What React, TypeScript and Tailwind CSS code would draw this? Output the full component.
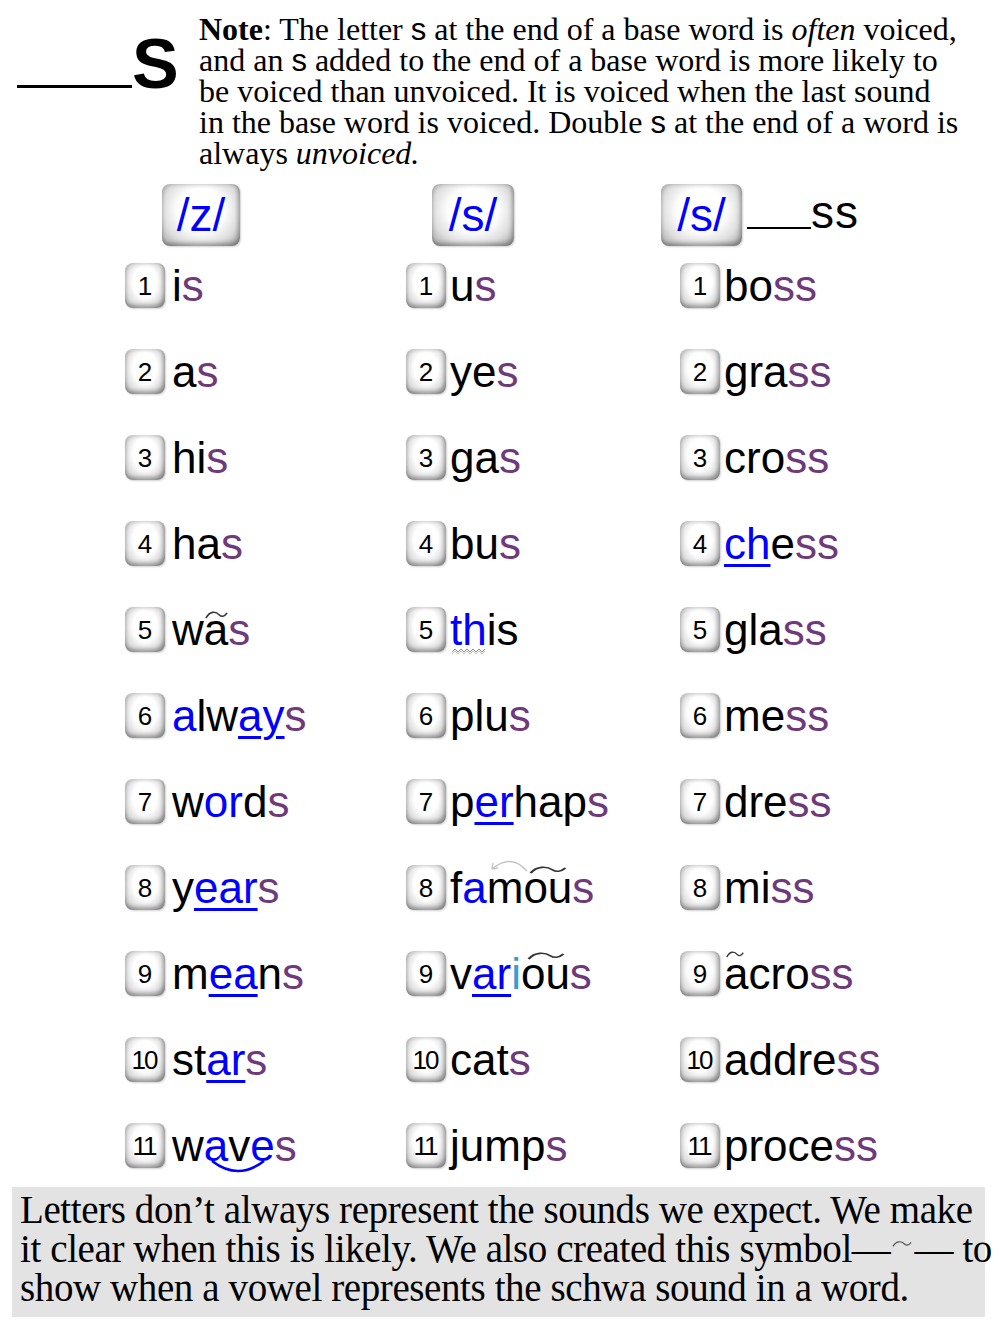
import React from "react";

type Color = "k" | "b" | "p" | "t";

interface Seg {
  t: string;
  c?: Color;
  u?: boolean;
  mark?: React.ReactNode;
}

const COLORS: Record<Color, string> = {
  k: "text-black",
  b: "text-[#0000ff]",
  p: "text-[#6f3a7a]",
  t: "text-[#3a9ccf]",
};

// small schwa symbol that sits above a vowel
const Schwa = ({ className }: { className: string }) => (
  <svg className={className} viewBox="0 0 24 8" preserveAspectRatio="none" fill="none">
    <path d="M1 7 C5 0 11 0 15 4 C17 6 20 6 23 2" stroke="#333" strokeWidth="1.6" />
  </svg>
);

const schwaA = <Schwa className="absolute left-[1px] top-[6px] w-[23px] h-[8px]" />;
const schwaOu = <Schwa className="absolute left-[6px] top-[3px] w-[38px] h-[8px]" />;
const schwaAcross = <Schwa className="absolute left-[2px] top-[2px] w-[18px] h-[7px]" />;

const famousArrow = (
  <svg className="absolute left-[25px] top-[-6px] w-[42px] h-[16px]" viewBox="0 0 42 16" fill="none">
    <path d="M40 14 Q24 -4 5 12" stroke="#c4c4c4" strokeWidth="1.5" />
    <path d="M5 12 L6 6 M5 12 L11 11" stroke="#c4c4c4" strokeWidth="1.5" />
  </svg>
);

const wavesArc = (
  <svg className="absolute left-[6px] top-[38px] w-[56px] h-[14px]" viewBox="0 0 56 14" fill="none">
    <path d="M2 2 Q28 22 54 2" stroke="#0000ff" strokeWidth="2.5" />
  </svg>
);

const zigzag = (
  <svg className="absolute left-[2px] top-[43px] w-[34px] h-[6px]" viewBox="0 0 34 6" fill="none">
    <path d="M0 4 L3 1 L6 4 L9 1 L12 4 L15 1 L18 4 L21 1 L24 4 L27 1 L30 4 L33 1" stroke="#8a8a8a" strokeWidth="1" />
    <path d="M0 6 L3 3 L6 6 L9 3 L12 6 L15 3 L18 6 L21 3 L24 6 L27 3 L30 6 L33 3" stroke="#b0b0b0" strokeWidth="0.8" />
  </svg>
);

const col1: Seg[][] = [
  [{ t: "i" }, { t: "s", c: "p" }],
  [{ t: "a" }, { t: "s", c: "p" }],
  [{ t: "hi" }, { t: "s", c: "p" }],
  [{ t: "ha" }, { t: "s", c: "p" }],
  [{ t: "w" }, { t: "a", mark: schwaA }, { t: "s", c: "p" }],
  [{ t: "a", c: "b" }, { t: "lw" }, { t: "ay", c: "b", u: true }, { t: "s", c: "p" }],
  [{ t: "w" }, { t: "or", c: "b" }, { t: "d" }, { t: "s", c: "p" }],
  [{ t: "y" }, { t: "ear", c: "b", u: true }, { t: "s", c: "p" }],
  [{ t: "m" }, { t: "ea", c: "b", u: true }, { t: "n" }, { t: "s", c: "p" }],
  [{ t: "st" }, { t: "ar", c: "b", u: true }, { t: "s", c: "p" }],
  [{ t: "w" }, { t: "a", c: "b", mark: wavesArc }, { t: "v" }, { t: "e", c: "b" }, { t: "s", c: "p" }],
];

const col2: Seg[][] = [
  [{ t: "u" }, { t: "s", c: "p" }],
  [{ t: "ye" }, { t: "s", c: "p" }],
  [{ t: "ga" }, { t: "s", c: "p" }],
  [{ t: "bu" }, { t: "s", c: "p" }],
  [{ t: "th", c: "b", mark: zigzag }, { t: "is" }],
  [{ t: "plu" }, { t: "s", c: "p" }],
  [{ t: "p" }, { t: "er", c: "b", u: true }, { t: "hap" }, { t: "s", c: "p" }],
  [{ t: "f" }, { t: "a", c: "b", mark: famousArrow }, { t: "m" }, { t: "ou", mark: schwaOu }, { t: "s", c: "p" }],
  [{ t: "v" }, { t: "ar", c: "b", u: true }, { t: "i", c: "t" }, { t: "ou", mark: schwaOu }, { t: "s", c: "p" }],
  [{ t: "cat" }, { t: "s", c: "p" }],
  [{ t: "jump" }, { t: "s", c: "p" }],
];

const col3: Seg[][] = [
  [{ t: "bo" }, { t: "ss", c: "p" }],
  [{ t: "gra" }, { t: "ss", c: "p" }],
  [{ t: "cro" }, { t: "ss", c: "p" }],
  [{ t: "ch", c: "b", u: true }, { t: "e" }, { t: "ss", c: "p" }],
  [{ t: "gla" }, { t: "ss", c: "p" }],
  [{ t: "me" }, { t: "ss", c: "p" }],
  [{ t: "dre" }, { t: "ss", c: "p" }],
  [{ t: "mi" }, { t: "ss", c: "p" }],
  [{ t: "a", mark: schwaAcross }, { t: "cro" }, { t: "ss", c: "p" }],
  [{ t: "addre" }, { t: "ss", c: "p" }],
  [{ t: "proce" }, { t: "ss", c: "p" }],
];

const bevel =
  "bg-[radial-gradient(ellipse_at_50%_42%,#ffffff_42%,#dedede_70%,#a2a2a2_100%)] shadow-[inset_-2px_-3px_4px_rgba(0,0,0,0.3),inset_2px_2px_3px_rgba(0,0,0,0.1),1px_1px_2px_rgba(0,0,0,0.18)]";

const Badge = ({ n }: { n: number }) => (
  <div
    className={`w-[40px] h-[45px] shrink-0 rounded-[8px] flex items-center justify-center text-[26px] leading-none text-black ${bevel} ${
      n > 9 ? "tracking-[-2px] pr-[2px]" : ""
    }`}
  >
    {n}
  </div>
);

const Word = ({ segs }: { segs: Seg[] }) => (
  <span className="text-[44px] leading-[45px] whitespace-nowrap">
    {segs.map((s, i) => (
      <span
        key={i}
        className={`relative ${COLORS[s.c ?? "k"]} ${
          s.u ? "underline decoration-[3px] underline-offset-[5px] decoration-[#0000ff]" : ""
        }`}
      >
        {s.t}
        {s.mark}
      </span>
    ))}
  </span>
);

const Cell = ({ n, segs, width, gap }: { n: number; segs: Seg[]; width: string; gap: string }) => (
  <div className={`flex items-start ${gap} ${width}`}>
    <Badge n={n} />
    <Word segs={segs} />
  </div>
);

const HeadBox = ({ label, width }: { label: string; width: string }) => (
  <div
    className={`h-[62px] ${width} shrink-0 rounded-[8px] flex items-center justify-center text-[46px] leading-none text-[#0000ff] ${bevel}`}
  >
    {label}
  </div>
);

const SansS = () => <span className="font-['Liberation_Sans',Arial,sans-serif] text-[31px]">s</span>;

export default function App() {
  return (
    <div className="w-[1000px] h-[1334px] bg-white text-black font-['Liberation_Sans',Arial,sans-serif] overflow-hidden">
      {/* top note */}
      <div className="flex">
        <div className="w-[199px] shrink-0 flex items-end pl-[17px] pt-[29px] self-start">
          <div className="w-[115px] h-[3px] bg-black mb-[11px]" />
          <span className="text-[70px] font-bold leading-none">S</span>
        </div>
        <div className="pt-[14px] font-['Liberation_Serif','Times_New_Roman',serif] text-[32px] leading-[31px] whitespace-nowrap">
          <div>
            <b>Note</b>: The letter <SansS /> at the end of a base word is <i>often</i> voiced,
          </div>
          <div>
            and an <SansS /> added to the end of a base word is more likely to
          </div>
          <div>be voiced than unvoiced. It is voiced when the last sound</div>
          <div>
            in the base word is voiced. Double <SansS /> at the end of a word is
          </div>
          <div>
            always <i>unvoiced.</i>
          </div>
        </div>
      </div>

      {/* column headings */}
      <div className="mt-[15px] flex items-start pl-[162px]">
        <HeadBox label="/z/" width="w-[78px]" />
        <div className="ml-[192px]">
          <HeadBox label="/s/" width="w-[82px]" />
        </div>
        <div className="ml-[147px]">
          <HeadBox label="/s/" width="w-[81px]" />
        </div>
        <div className="h-[62px] flex items-end">
          <div className="w-[64px] h-[2px] bg-black ml-[5px] mb-[17px]" />
          <span className="text-[46px] leading-[44px] tracking-[1px] mb-[12px]">ss</span>
        </div>
      </div>

      {/* word rows */}
      <div className="mt-[17px] flex flex-col gap-[41px] pl-[125px]">
        {col1.map((_, i) => (
          <div key={i} className="flex h-[45px]">
            <Cell n={i + 1} segs={col1[i]} width="w-[281px]" gap="gap-[7px]" />
            <Cell n={i + 1} segs={col2[i]} width="w-[274px]" gap="gap-[4px]" />
            <Cell n={i + 1} segs={col3[i]} width="flex-1" gap="gap-[4px]" />
          </div>
        ))}
      </div>

      {/* footer */}
      <div className="mt-[19px] ml-[12px] w-[973px] h-[130px] bg-[#e3e3e3] pl-[8px] pt-[3px] font-['Liberation_Serif','Times_New_Roman',serif] text-[39px] leading-[39px] tracking-[-0.4px] whitespace-nowrap">
        <div>Letters don’t always represent the sounds we expect. We make</div>
        <div>
          it clear when this is likely. We also created this symbol—
          <svg className="inline-block w-[20px] h-[8px] align-[14px] mx-[2px]" viewBox="0 0 24 8" fill="none">
            <path d="M1 7 C5 0 11 0 15 4 C17 6 20 6 23 2" stroke="#555" strokeWidth="1.4" />
          </svg>
          — to
        </div>
        <div>show when a vowel represents the schwa sound in a word.</div>
      </div>
    </div>
  );
}
